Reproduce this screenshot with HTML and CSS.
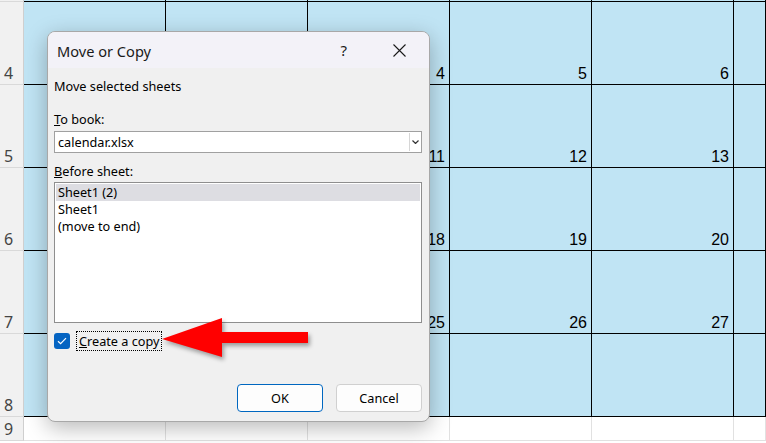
FILE: index.html
```html
<!DOCTYPE html>
<html>
<head>
<meta charset="utf-8">
<link rel="stylesheet" href="styles.css">
</head>
<body>
<div class="sheet">
  <div class="row top"><div class="rh"></div><div class="c"></div><div class="c"></div><div class="c"></div><div class="c"></div><div class="c"></div><div class="c"></div></div>
  <div class="row"><div class="rh">4</div><div class="c"></div><div class="c"></div><div class="c">4</div><div class="c">5</div><div class="c">6</div><div class="c"></div></div>
  <div class="row"><div class="rh">5</div><div class="c"></div><div class="c"></div><div class="c">11</div><div class="c">12</div><div class="c">13</div><div class="c"></div></div>
  <div class="row"><div class="rh">6</div><div class="c"></div><div class="c"></div><div class="c">18</div><div class="c">19</div><div class="c">20</div><div class="c"></div></div>
  <div class="row"><div class="rh">7</div><div class="c"></div><div class="c"></div><div class="c">25</div><div class="c">26</div><div class="c">27</div><div class="c"></div></div>
  <div class="row"><div class="rh">8</div><div class="c"></div><div class="c"></div><div class="c"></div><div class="c"></div><div class="c"></div><div class="c"></div></div>
  <div class="row plain"><div class="rh">9</div><div class="c"></div><div class="c"></div><div class="c"></div><div class="c"></div><div class="c"></div><div class="c"></div></div>
</div>

<div class="dialog">
  <div class="titlebar">
    <span class="title">Move or Copy</span>
    <span class="help">?</span>
    <svg class="close" width="13" height="13" viewBox="0 0 13 13"><path d="M0.5 0.5 L12.5 12.5 M12.5 0.5 L0.5 12.5" stroke="#1a1a1a" stroke-width="1.1" fill="none"/></svg>
  </div>
  <div class="body">
    <div class="lbl first">Move selected sheets</div>
    <div class="lbl book"><u>T</u>o book:</div>
    <div class="select">
      <span class="sel-text">calendar.xlsx</span>
      <span class="sel-btn"><svg width="7" height="4" viewBox="0 0 7 4"><path d="M0.5 0.5 L3.5 3.5 L6.5 0.5" stroke="#333" stroke-width="1.2" fill="none"/></svg></span>
    </div>
    <div class="lbl before"><u>B</u>efore sheet:</div>
    <div class="listbox">
      <div class="item selected">Sheet1 (2)</div>
      <div class="item">Sheet1</div>
      <div class="item">(move to end)</div>
    </div>
    <div class="check-row">
      <span class="checkbox"><svg width="10" height="8" viewBox="0 0 10 8"><path d="M1 4.2 L3.6 6.6 L9 1.2" stroke="#fff" stroke-width="1.2" fill="none"/></svg></span>
      <span class="check-label"><u>C</u>reate a copy</span>
    </div>
    <div class="buttons">
      <button class="btn ok">OK</button>
      <button class="btn">Cancel</button>
    </div>
  </div>
</div>

<svg class="arrow" width="170" height="60" viewBox="0 0 170 60">
  <polygon points="2,26 62,5 62,19 148,19 148,30 62,30 62,44" fill="#ff0000"/>
</svg>
</body>
</html>
```
FILE: styles.css
```css
html, body {
  margin: 0;
  padding: 0;
  width: 766px;
  height: 443px;
  overflow: hidden;
  background: #ffffff;
}

.sheet {
  display: flex;
  flex-direction: column;
  width: 766px;
}

.row {
  display: grid;
  grid-template-columns: 24px repeat(5, 142px) 32px;
  height: 83px;
}

.row.top {
  height: 2px;
}

.rh {
  box-sizing: border-box;
  background: #f1f1f1;
  border-right: 1px solid #cfcfcf;
  border-bottom: 1px solid #d9d9d9;
  font-family: "Noto Sans", sans-serif;
  font-size: 16px;
  color: #444;
  display: flex;
  align-items: flex-end;
  padding: 0 0 1px 4px;
  line-height: 20px;
}

.c {
  box-sizing: border-box;
  background: #c0e4f4;
  border-right: 1px solid #000;
  border-bottom: 1px solid #000;
  font-family: "Liberation Sans", Arial, sans-serif;
  font-size: 16px;
  line-height: 18px;
  color: #000;
  display: flex;
  align-items: flex-end;
  justify-content: flex-end;
  padding: 0 4px 1px 0;
}

.row.plain {
  height: 24px;
}

.row.plain .c {
  background: #fff;
  border-right: 1px solid #e1e1e1;
  border-bottom: 1px solid #e1e1e1;
}

.row.plain .rh {
  line-height: 22px;
  padding-bottom: 0;
}

/* dialog */
.dialog {
  position: absolute;
  left: 47px;
  top: 31px;
  width: 383px;
  height: 391px;
  box-sizing: border-box;
  border: 1px solid #a8a8a8;
  border-radius: 8px;
  overflow: hidden;
  background: #f0f0f0;
  box-shadow: 0 6px 22px rgba(0, 0, 0, 0.28);
  font-family: "Noto Sans", sans-serif;
  font-size: 12.7px;
  color: #000;
}

.titlebar {
  height: 36px;
  background: #f3f2f8;
  display: flex;
  align-items: center;
  padding-left: 9px;
}

.title {
  font-size: 14.6px;
  color: #1a1a1a;
  flex: 1;
  margin-top: 1px;
}

.help {
  font-size: 15px;
  color: #1a1a1a;
  margin-right: 46px;
}

.close {
  margin-right: 23px;
}

.body {
  padding: 10px 7px 0 6px;
  display: flex;
  flex-direction: column;
}

.lbl {
  line-height: 16px;
  height: 16px;
}

.lbl.book {
  margin-top: 17px;
}

.select {
  margin-top: 4px;
  height: 22px;
  box-sizing: border-box;
  border: 1px solid #a0a0a0;
  background: #fff;
  display: flex;
  align-items: center;
}

.sel-text {
  flex: 1;
  padding-left: 3px;
}

.sel-btn {
  width: 10px;
  height: 18px;
  border-left: 1px solid #d6d6d6;
  display: flex;
  align-items: center;
  justify-content: center;
  margin-right: 1px;
}

.lbl.before {
  margin-top: 10px;
}

.listbox {
  margin-top: 3px;
  height: 141px;
  box-sizing: border-box;
  border: 1px solid #8e8e8e;
  background: #fff;
  padding: 1px;
}

.item {
  line-height: 17px;
  height: 17px;
  padding-left: 2px;
}

.item.selected {
  background: #dddde2;
}

.check-row {
  margin-top: 8px;
  height: 20px;
  display: flex;
  align-items: center;
}

.checkbox {
  width: 16px;
  height: 16px;
  border-radius: 3px;
  background: #0564c2;
  display: flex;
  align-items: center;
  justify-content: center;
}

.check-label {
  margin-left: 6px;
  height: 20px;
  box-sizing: border-box;
  border: 1px dotted #000;
  padding: 0 1px 0 2px;
  line-height: 18px;
}

.buttons {
  margin-top: 33px;
  display: flex;
  justify-content: flex-end;
  gap: 13px;
}

.btn {
  width: 86px;
  height: 28px;
  box-sizing: border-box;
  border: 1px solid #d0d0d0;
  border-radius: 4px;
  background: #fdfdfd;
  font-family: "Noto Sans", sans-serif;
  font-size: 12.7px;
  color: #000;
  padding: 0;
}

.btn.ok {
  border: 1px solid #0067c0;
}

.arrow {
  position: absolute;
  left: 160px;
  top: 313px;
  filter: drop-shadow(2px 3px 2px rgba(0, 0, 0, 0.35));
}
```
